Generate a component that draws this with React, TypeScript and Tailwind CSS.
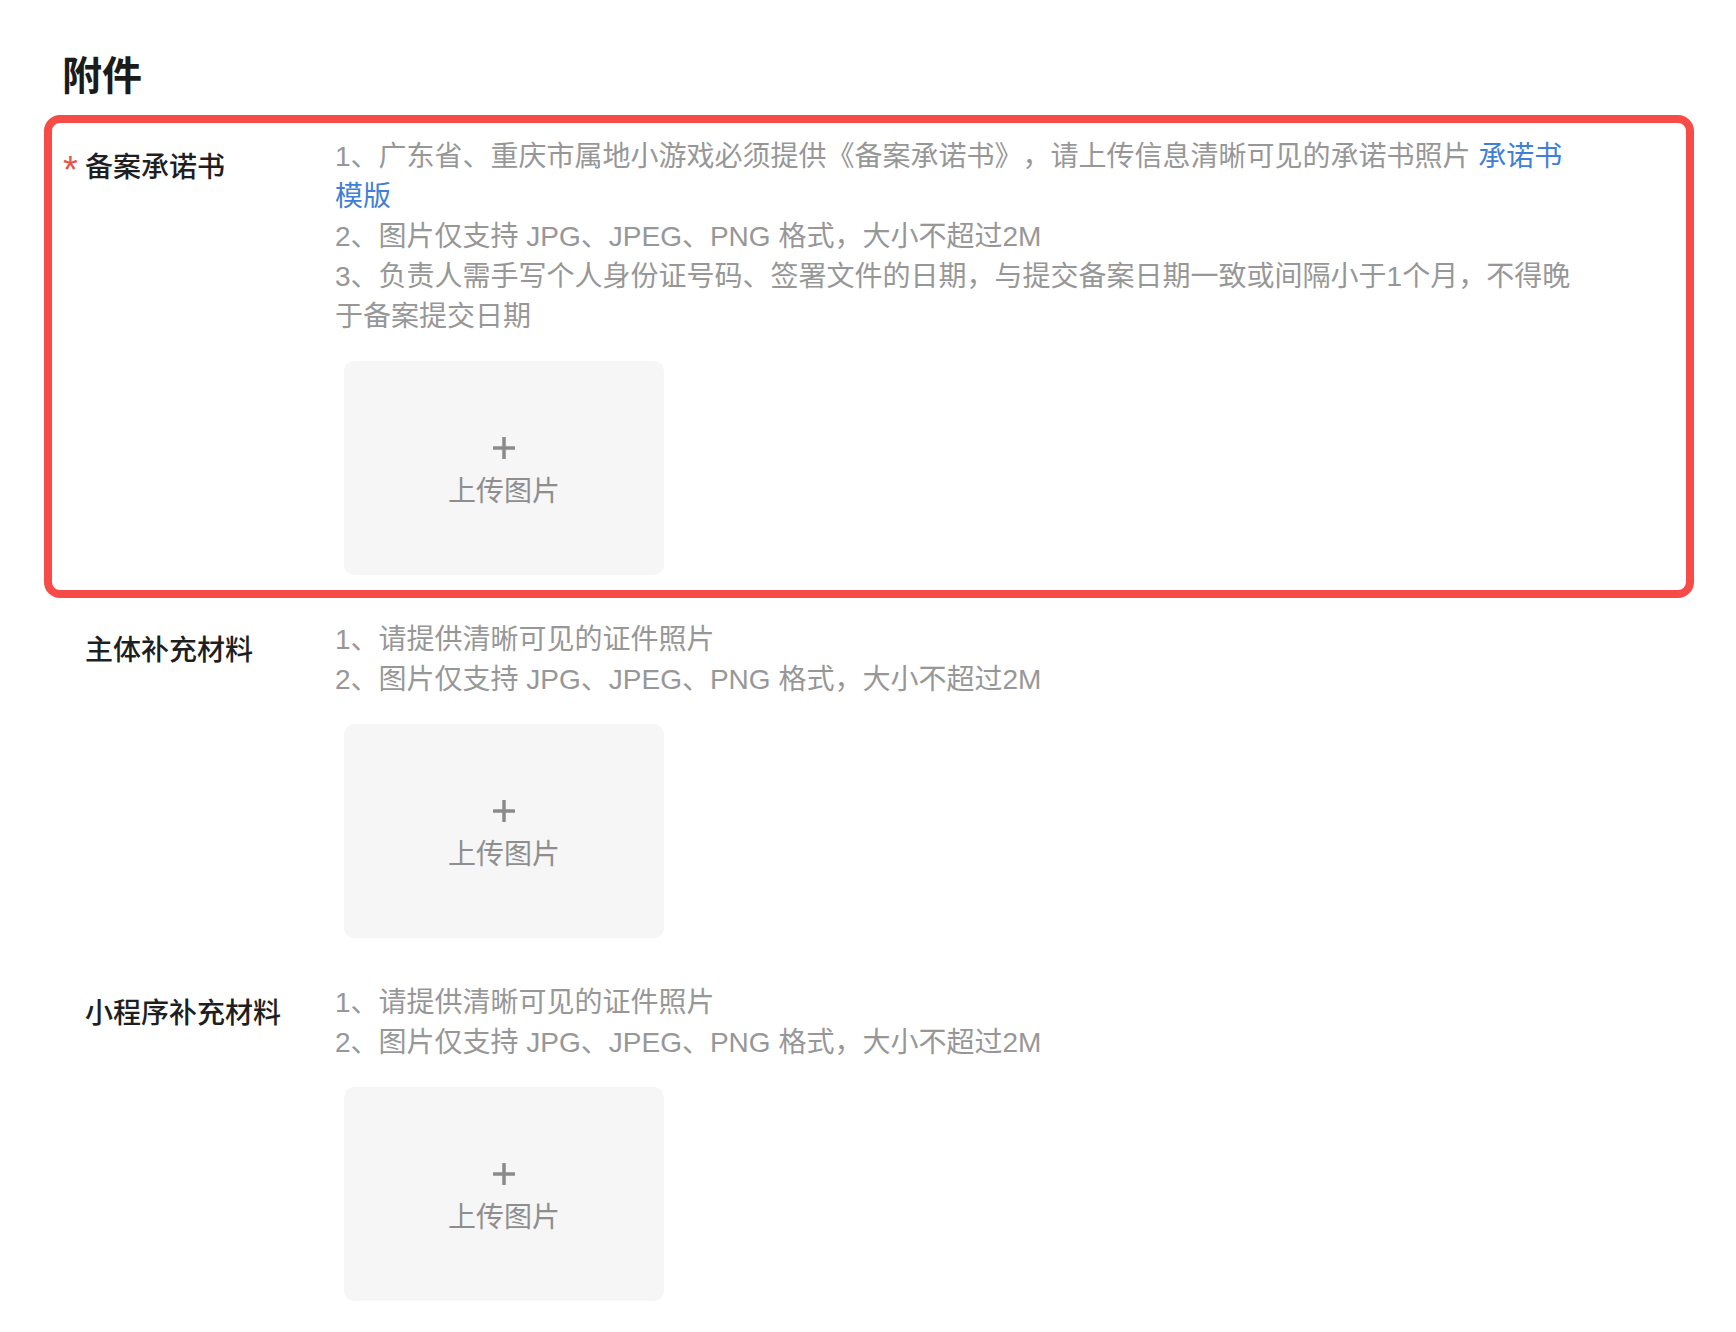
const FONT = "font-['Liberation_Sans','Noto_Sans_CJK_SC',sans-serif]"

type Item = {
  label: string
  required?: boolean
  highlight?: boolean
  lines: React.ReactNode[]
}

const tips: Item[] = [
  {
    label: "备案承诺书",
    required: true,
    highlight: true,
    lines: [
      <>
        1、广东省、重庆市属地小游戏必须提供《备案承诺书》，请上传信息清晰可见的承诺书照片{" "}
        <a href="#" className="text-[#3f7fd6]">承诺书模版</a>
      </>,
      "2、图片仅支持 JPG、JPEG、PNG 格式，大小不超过2M",
      "3、负责人需手写个人身份证号码、签署文件的日期，与提交备案日期一致或间隔小于1个月，不得晚于备案提交日期",
    ],
  },
  {
    label: "主体补充材料",
    lines: ["1、请提供清晰可见的证件照片", "2、图片仅支持 JPG、JPEG、PNG 格式，大小不超过2M"],
  },
  {
    label: "小程序补充材料",
    lines: ["1、请提供清晰可见的证件照片", "2、图片仅支持 JPG、JPEG、PNG 格式，大小不超过2M"],
  },
]

function Upload() {
  return (
    <button className="ml-[9px] mt-[24px] flex h-[214px] w-[320px] flex-col items-center justify-center rounded-[10px] bg-[#f6f6f7] pt-[12px]">
      <svg width="22" height="22" viewBox="0 0 22 22" className="block">
        <path d="M11 1v20M1 11h20" stroke="#8a8a8a" strokeWidth="3.5" strokeLinecap="round" />
      </svg>
      <span className="mt-[13px] text-[28px] leading-[40px] text-[#8e8e8e]">上传图片</span>
    </button>
  )
}

function Row({ item }: { item: Item }) {
  return (
    <div
      className={
        item.highlight
          ? "flex rounded-[16px] border-[8px] border-[#f64b47] pb-[15px] pl-[11px] pt-[14px]"
          : "flex rounded-[16px] border-[8px] border-transparent pb-[15px] pl-[11px] pt-[14px]"
      }
    >
      <div className="flex w-[272px] shrink-0 items-start pt-[11px]">
        <span className="mt-[2px] w-[22px] text-[38px] leading-[40px] text-[#e5534b]">
          {item.required ? "*" : ""}
        </span>
        <span className="text-[28px] font-medium leading-[40px] text-[#1f1f1f]">{item.label}</span>
      </div>
      <div className="flex flex-col">
        <div className="w-[1245px] text-[28px] leading-[40px] text-[#979797] [text-spacing-trim:space-all]">
          {item.lines.map((l, i) => (
            <p key={i}>{l}</p>
          ))}
        </div>
        <Upload />
      </div>
    </div>
  )
}

export default function App() {
  return (
    <div className={`min-h-[1332px] w-full bg-white pl-[44px] pt-[52px] ${FONT}`}>
      <h1 className="ml-[18px] text-[40px] font-bold leading-[48px] text-[#1b1b1b]">附件</h1>
      <div className="mt-[15px] w-[1650px]">
        {tips.map((t) => (
          <Row key={t.label} item={t} />
        ))}
      </div>
    </div>
  )
}
